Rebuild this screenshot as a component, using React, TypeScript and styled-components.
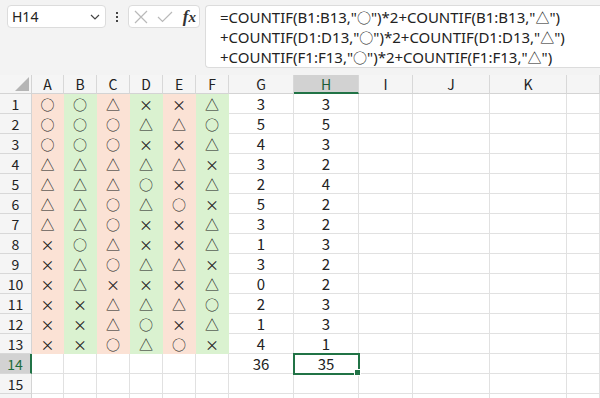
import React from 'react';
import styled, { createGlobalStyle, css } from 'styled-components';

const GlobalStyle = createGlobalStyle`
  html, body {
    margin: 0;
    padding: 0;
    background: #ffffff;
    overflow: hidden;
  }
  #root {
    width: 600px;
    height: 398px;
    overflow: hidden;
  }
`;

type Fill = 'peach' | 'green' | 'none';

const COLS = ['A', 'B', 'C', 'D', 'E', 'F', 'G', 'H', 'I', 'J', 'K', ''];
const WIDTHS = [32, 32, 33, 33, 33, 33, 33, 65, 65, 54, 77, 77];

const MARKS = [
  '○○△××△',
  '○○○△△○',
  '○○○××△',
  '△△△△△×',
  '△△△○×△',
  '△△○△○×',
  '△△○××△',
  '×○△××△',
  '×△○△△×',
  '×△×××△',
  '××△△△○',
  '××△○×△',
  '××○△○×',
];
const G_VALUES = [3, 5, 4, 3, 2, 5, 3, 1, 3, 0, 2, 1, 4];
const H_VALUES = [3, 5, 3, 2, 4, 2, 2, 3, 2, 2, 3, 3, 1];

const FORMULA = [
  '=COUNTIF(B1:B13,"○")*2+COUNTIF(B1:B13,"△")',
  '+COUNTIF(D1:D13,"○")*2+COUNTIF(D1:D13,"△")',
  '+COUNTIF(F1:F13,"○")*2+COUNTIF(F1:F13,"△")',
];

// ○ と △ だけ CJK フォントで描く
const renderFormula = (line: string) =>
  line.split(/([○△])/).map((part, i) =>
    part === '○' || part === '△' ? <Sym key={i}>{part}</Sym> : part
  );

const App = () => {
  const rows: React.ReactNode[] = [];

  for (let r = 1; r <= 16; r++) {
    const selectedRow = r === 14;
    rows.push(
      <RowHeader key={`rh${r}`} selected={selectedRow}>
        {r <= 15 ? r : ''}
      </RowHeader>
    );
    for (let c = 0; c < 11; c++) {
      let text: React.ReactNode = '';
      let fill: Fill = 'none';
      if (r <= 13 && c < 6) {
        text = MARKS[r - 1][c];
        fill = c % 2 === 0 ? 'peach' : 'green';
      } else if (r <= 13 && c === 6) {
        text = G_VALUES[r - 1];
      } else if (r <= 13 && c === 7) {
        text = H_VALUES[r - 1];
      } else if (r === 14 && c === 6) {
        text = 36;
      } else if (r === 14 && c === 7) {
        text = 35;
      }
      const active = r === 14 && c === 7;
      rows.push(
        <Cell key={`c${r}-${c}`} fill={fill} mark={c < 6} active={active}>
          {text}
          {active && <Handle />}
        </Cell>
      );
    }
    rows.push(<Cell key={`c${r}-l`} fill="none" mark={false} active={false} />);
  }

  return (
    <>
      <GlobalStyle />
      <Page>
        <FormulaBar>
          <NameBox>
            <span>H14</span>
            <svg width="10" height="6" viewBox="0 0 10 6">
              <path d="M1 1 L5 5 L9 1" fill="none" stroke="#444" strokeWidth="1.2" />
            </svg>
          </NameBox>
          <Dots>
            <i />
            <i />
            <i />
          </Dots>
          <ButtonBox>
            <svg width="14" height="14" viewBox="0 0 14 14">
              <path d="M1 1 L13 13 M13 1 L1 13" stroke="#b9b9b9" strokeWidth="1.2" />
            </svg>
            <svg width="16" height="12" viewBox="0 0 16 12">
              <path d="M1 6 L5.5 10.5 L15 1" fill="none" stroke="#b9b9b9" strokeWidth="1.2" />
            </svg>
            <Fx>
              f<sub>x</sub>
            </Fx>
          </ButtonBox>
          <FormulaBox>
            {FORMULA.map((line) => (
              <div key={line}>{renderFormula(line)}</div>
            ))}
          </FormulaBox>
        </FormulaBar>
        <Sheet>
          <Corner>
            <svg width="14" height="14" viewBox="0 0 14 14">
              <path d="M14 0 L14 14 L0 14 Z" fill="#b5b5b5" />
            </svg>
          </Corner>
          {COLS.map((name) => (
            <ColHeader key={`h${name}`} selected={name === 'H'}>
              {name}
            </ColHeader>
          ))}
          {rows}
        </Sheet>
      </Page>
    </>
  );
};

export default App;

const Page = styled.div`
  width: 600px;
  height: 398px;
  display: flex;
  flex-direction: column;
  background: #f3f3f3;
  overflow: hidden;
`;

const FormulaBar = styled.div`
  height: 75px;
  flex-shrink: 0;
  display: flex;
  align-items: flex-start;
  padding: 5px 0 0 7px;
  box-sizing: border-box;
`;

const NameBox = styled.div`
  width: 99px;
  height: 23px;
  box-sizing: border-box;
  background: #ffffff;
  border: 1px solid #dcdcdc;
  border-radius: 4px;
  display: flex;
  align-items: center;
  justify-content: space-between;
  padding: 0 5px 0 4px;
  font-family: 'Noto Sans', 'Liberation Sans', sans-serif;
  font-size: 14px;
  color: #222;
`;

const Dots = styled.div`
  width: 22px;
  height: 23px;
  display: flex;
  flex-direction: column;
  align-items: center;
  justify-content: center;
  gap: 2px;

  i {
    width: 2px;
    height: 2px;
    background: #444;
  }
`;

const ButtonBox = styled.div`
  width: 72px;
  height: 23px;
  box-sizing: border-box;
  background: #ffffff;
  border: 1px solid #dcdcdc;
  border-radius: 4px;
  display: flex;
  align-items: center;
  justify-content: space-between;
  padding: 0 3px 0 5px;
`;

const Fx = styled.span`
  font-family: 'Liberation Serif', serif;
  font-style: italic;
  font-weight: bold;
  font-size: 17px;
  color: #333;
  line-height: 1;

  sub {
    font-size: 15px;
    vertical-align: baseline;
  }
`;

const FormulaBox = styled.div`
  margin-left: 5px;
  flex: 1;
  height: 63px;
  box-sizing: border-box;
  background: #ffffff;
  border: 1px solid #dcdcdc;
  border-right: none;
  border-radius: 4px 0 0 4px;
  padding: 1px 0 0 14px;
  font-family: 'Noto Sans', 'Liberation Sans', sans-serif;
  font-size: 15px;
  line-height: 20px;
  color: #222;
  white-space: nowrap;
  overflow: hidden;
`;

const Sym = styled.span`
  font-family: 'Noto Sans CJK JP', sans-serif;
  font-size: 14px;
`;

const Sheet = styled.div`
  flex: 1;
  display: grid;
  grid-template-columns: ${WIDTHS.map((w) => `${w}px`).join(' ')} 1fr;
  grid-template-rows: 19px repeat(16, 20px);
  background: #ffffff;
  overflow: hidden;
`;

const headerText = css`
  font-family: 'Noto Sans CJK JP', 'Noto Sans', sans-serif;
  font-size: 14px;
  display: flex;
  align-items: center;
  justify-content: center;
  box-sizing: border-box;
`;

const Corner = styled.div`
  background: #f5f5f5;
  border-right: 1px solid #d4d4d4;
  border-bottom: 1px solid #d4d4d4;
  box-sizing: border-box;
  display: flex;
  align-items: flex-end;
  justify-content: flex-end;
  padding: 0 2px 2px 0;
`;

const ColHeader = styled.div<{ selected: boolean }>`
  ${headerText};
  background: ${({ selected }) => (selected ? '#d2d2d2' : '#f5f5f5')};
  color: ${({ selected }) => (selected ? '#1d5e36' : '#222')};
  border-right: 1px solid #d8d8d8;
  border-bottom: ${({ selected }) => (selected ? '2px solid #217346' : '1px solid #d4d4d4')};
`;

const RowHeader = styled.div<{ selected: boolean }>`
  ${headerText};
  background: ${({ selected }) => (selected ? '#d2d2d2' : '#f5f5f5')};
  color: ${({ selected }) => (selected ? '#1d6b3c' : '#222')};
  border-bottom: 1px solid #d8d8d8;
  border-right: ${({ selected }) => (selected ? '2px solid #217346' : '1px solid #d4d4d4')};
`;

const fillColor = (fill: Fill) =>
  fill === 'peach' ? '#fbe2d5' : fill === 'green' ? '#daf2d0' : '#ffffff';

const Cell = styled.div<{ fill: Fill; mark: boolean; active: boolean }>`
  position: relative;
  box-sizing: border-box;
  background: ${({ fill }) => fillColor(fill)};
  border-right: 1px solid ${({ fill }) => (fill === 'none' ? '#e1e1e1' : fillColor(fill))};
  border-bottom: 1px solid ${({ fill }) => (fill === 'none' ? '#e1e1e1' : fillColor(fill))};
  display: flex;
  align-items: center;
  justify-content: center;
  font-family: 'Noto Sans CJK JP', 'Noto Sans', sans-serif;
  font-size: ${({ mark }) => (mark ? '14px' : '15px')};
  color: #222;
  ${({ active }) =>
    active &&
    css`
      outline: 2px solid #217346;
      outline-offset: -1px;
      z-index: 1;
    `}
`;

const Handle = styled.span`
  position: absolute;
  right: -3px;
  bottom: -3px;
  width: 5px;
  height: 5px;
  background: #217346;
  border: 1px solid #ffffff;
`;
